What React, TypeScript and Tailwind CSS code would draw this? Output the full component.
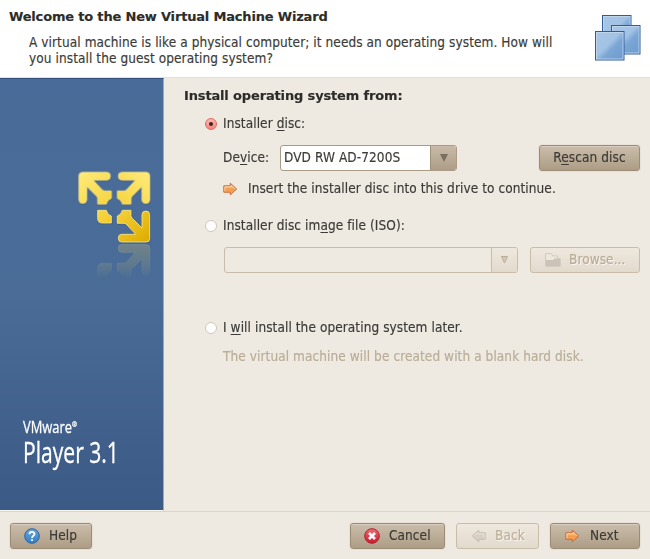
import React from "react";

const raised =
  "border border-[#9c8c76] bg-linear-to-b from-[#cbbdab] to-[#ad9d86] shadow-[inset_0_1px_0_#d9cdbf,0_0_0_1px_#e8e1d7]";
const faded = "border border-[#c9bda9] bg-linear-to-b from-[#efe8de] to-[#e3dacd]";

function Arrow({ muted = false, left = false }: { muted?: boolean; left?: boolean }) {
  return (
    <svg width="16" height="14" viewBox="0 0 16 14" className={left ? "shrink-0 -scale-x-100" : "shrink-0"}>
      <defs>
        <linearGradient id="orange" x1="0" y1="0" x2="0" y2="1">
          <stop offset="0" stopColor="#ffd09a" />
          <stop offset=".55" stopColor="#f59a4d" />
          <stop offset="1" stopColor="#ffb35f" />
        </linearGradient>
      </defs>
      <path
        d="M.8 3.8H7.3V1.2L13.6 7L7.3 12.8V10.2H.8Z"
        fill={muted ? "#d8d0c5" : "url(#orange)"}
        stroke={muted ? "#c4bbad" : "#c4683a"}
        strokeLinejoin="round"
      />
      <path d="M1.9 9.2V4.8H8.3V3.5L12 7" fill="none" stroke={muted ? "#eee8df" : "#ffe0b8"} strokeWidth=".8" />
    </svg>
  );
}

const arrowPath =
  "M67 52H141Q151 52 151 63Q151 75 141 75H99L125 103Q129 108 134 108H154V130Q142 133 139 147H113V131Q113 127 109 123L80 94V134Q80 145 68 145Q57 145 57 134V62Q57 52 67 52Z";

function LogoShapes({ fill, stroke, last }: { fill: string; stroke: string; last?: string }) {
  return (
    <g fill={fill} stroke={stroke} strokeWidth="2.5" strokeLinejoin="round">
      <path d={arrowPath} />
      <path d={arrowPath} transform="translate(326 0) scale(-1 1)" />
      <path d={arrowPath} transform="translate(326 313) scale(-1 -1)" fill={last ?? fill} />
      <path d="M113 166H139Q142 180 154 183V204H127Q113 204 113 190Z" />
    </g>
  );
}

function Logo() {
  return (
    <svg width="104" height="135" viewBox="0 0 312 405">
      <defs>
        <linearGradient id="gold" gradientUnits="userSpaceOnUse" x1="60" y1="50" x2="250" y2="250">
          <stop offset="0" stopColor="#ffec7c" />
          <stop offset=".5" stopColor="#f7d43c" />
          <stop offset="1" stopColor="#dfad00" />
        </linearGradient>
        <linearGradient id="goldSE" gradientUnits="userSpaceOnUse" x1="70" y1="52" x2="150" y2="147">
          <stop offset="0" stopColor="#dfad00" />
          <stop offset="1" stopColor="#f4d03a" />
        </linearGradient>
        <linearGradient id="fade" gradientUnits="userSpaceOnUse" x1="0" y1="264" x2="0" y2="372">
          <stop offset="0" stopColor="#fff" stopOpacity=".5" />
          <stop offset=".6" stopColor="#fff" stopOpacity=".28" />
          <stop offset="1" stopColor="#fff" stopOpacity="0" />
        </linearGradient>
        <mask id="mirror" maskUnits="userSpaceOnUse" x="0" y="266" width="312" height="139">
          <rect y="266" width="312" height="106" fill="url(#fade)" />
        </mask>
      </defs>
      <g mask="url(#mirror)">
        <g transform="translate(0 530) scale(1 -1)">
          <LogoShapes fill="#979c78" stroke="#b4b594" />
        </g>
      </g>
      <g transform="translate(1 2)" opacity=".35">
        <LogoShapes fill="#28405f" stroke="#28405f" />
      </g>
      <LogoShapes fill="url(#gold)" stroke="#fbe888" last="url(#goldSE)" />
    </svg>
  );
}

function Machines() {
  return (
    <svg width="46" height="46" viewBox="0 0 46 46">
      <defs>
        <linearGradient id="pane" x1="0" y1="0" x2="1" y2="1">
          <stop offset="0" stopColor="#a9c6e6" />
          <stop offset=".45" stopColor="#a2c3e5" />
          <stop offset=".6" stopColor="#7ba6d5" />
          <stop offset="1" stopColor="#6c9bd0" />
        </linearGradient>
      </defs>
      {[[7.5, 0.5], [16.5, 10.5], [0.5, 16.5]].map(([x, y]) => (
        <g key={x}>
          <rect x={x} y={y} width="28.5" height="28.5" fill="url(#pane)" stroke="#335c94" />
          <rect x={x + 1} y={y + 1} width="26.5" height="26.5" fill="none" stroke="#c5daf0" strokeWidth=".8" />
        </g>
      ))}
    </svg>
  );
}

function Radio({ on = false }: { on?: boolean }) {
  return (
    <span
      className={
        on
          ? "flex size-3 shrink-0 items-center justify-center rounded-full border border-[#dc6a60] bg-linear-to-b from-[#f9b9b1] to-[#f2867e]"
          : "size-3 shrink-0 rounded-full border border-[#cfc6b8] bg-white"
      }
    >
      {on && <span className="size-[4px] rounded-full bg-[#48211c]" />}
    </span>
  );
}

function Key({ children }: { children: React.ReactNode }) {
  return <span className="underline decoration-1 underline-offset-2">{children}</span>;
}

function Label({ children }: { children: React.ReactNode }) {
  return <span className="-mt-[2px] block">{children}</span>;
}

export default function App() {
  return (
    <div className="flex h-[559px] w-[650px] flex-col overflow-hidden bg-[#eee9e1] font-['DejaVu_Sans_Condensed','DejaVu_Sans',sans-serif] text-[13.5px] leading-4 tracking-[0.08px] whitespace-nowrap text-[#3c3b37] [-webkit-text-stroke:0.15px]">
      <header className="flex h-[78px] shrink-0 justify-between border-b border-[#e6e0d4] bg-white pr-[9px] pl-[9px]">
        <div className="pt-[9px]">
          <h1 className="font-['DejaVu_Sans',sans-serif] text-[13px] font-bold tracking-[-0.18px] text-[#2d2c29]">
            Welcome to the New Virtual Machine Wizard
          </h1>
          <p className="mt-[9px] ml-5">
            A virtual machine is like a physical computer; it needs an operating system. How will
            <br />
            you install the guest operating system?
          </p>
        </div>
        <div className="pt-[15px]">
          <Machines />
        </div>
      </header>

      <div className="flex h-[433px] shrink-0">
        <aside className="flex w-[164px] shrink-0 flex-col border-t border-r border-b border-t-[#34527c] border-r-[#9da9b6] border-b-[#f8f5ef] bg-linear-to-b from-[#486b99] via-[#4a6c97] to-[#3b5a85] pt-[76px]">
          <div className="pl-[60px]">
            <Logo />
          </div>
          <div className="mt-[127px] pl-[23px] font-['Open_Sans',sans-serif] tracking-normal text-white [-webkit-text-stroke:0.3px]">
            <div className="flex h-5 origin-left scale-x-[.76] text-[17px] leading-5">
              <span>VMware</span>
              <span className="text-[8px] leading-[14px]">®</span>
            </div>
            <div className="mt-px h-7 origin-left scale-x-[.74] text-[28.5px] leading-7">Player 3.1</div>
          </div>
        </aside>

        <main className="flex flex-1 flex-col pr-[10px] pl-5">
          <h2 className="mt-[10px] font-['DejaVu_Sans',sans-serif] text-[13px] font-bold tracking-[-0.15px] text-[#2d2c29]">
            Install operating system from:
          </h2>

          <div className="mt-3 ml-[21px] flex h-4 items-center gap-[6px]">
            <Radio on />
            <Label>Installer <Key>d</Key>isc:</Label>
          </div>
          <div className="mt-[13px] ml-[39px] flex h-[26px] items-center">
            <span className="-mt-[2px] w-[57px]">De<Key>v</Key>ice:</span>
            <div className="flex h-[26px] w-[177px] overflow-hidden rounded-[3px] border border-[#a99b86] bg-white">
              <span className="flex-1 pl-[3px] leading-[22px]">DVD RW AD-7200S</span>
              <span className="flex w-[26px] items-center justify-center border-l border-[#a09077] bg-linear-to-b from-[#c9bba8] to-[#ad9d87]">
                <svg width="8" height="8" viewBox="0 0 8 8"><path d="M0 0H8L4 8Z" fill="#7b6e5c" /></svg>
              </span>
            </div>
            <div className={`ml-auto flex h-[26px] w-[101px] items-center justify-center rounded-[3px] ${raised}`}>
              <Label>R<Key>e</Key>scan disc</Label>
            </div>
          </div>
          <div className="mt-[10px] ml-[39px] flex h-4 items-center gap-[9px]">
            <Arrow />
            <Label>Insert the installer disc into this drive to continue.</Label>
          </div>

          <div className="mt-[21px] ml-[21px] flex h-4 items-center gap-[6px]">
            <Radio />
            <Label>Installer disc im<Key>a</Key>ge file (ISO):</Label>
          </div>
          <div className="mt-[13px] ml-[40px] flex h-[26px] justify-between">
            <div className="flex w-[294px] overflow-hidden rounded-[3px] border border-[#c9bda9]">
              <span className="flex-1" />
              <span className="flex w-[26px] items-center justify-center border-l border-[#c9bda9] bg-linear-to-b from-[#efe8de] to-[#e3dacd]">
                <svg width="7" height="8" viewBox="0 0 7 8"><path d="M.5 .5H6.5L3.5 7Z" fill="#d3cabb" stroke="#b9ad99" /></svg>
              </span>
            </div>
            <div className={`flex w-[110px] items-center rounded-[3px] pl-[14px] text-[#b9ad97] [text-shadow:1px_1px_0_#f8f4ee] ${faded}`}>
              <svg width="16" height="16" viewBox="0 0 16 16" className="mr-2">
                <path d="M.5 14V1.5H6L8 4H12.5V7H15V14Z" fill="#ece6dd" stroke="#d3cbbf" />
                <path d="M1 14.5V8H8L9.5 6.5H15.5V14.5Z" fill="#cbc3b7" />
              </svg>
              <Label>Browse...</Label>
            </div>
          </div>

          <div className="mt-[47px] ml-[21px] flex h-4 items-center gap-[6px]">
            <Radio />
            <Label>I <Key>w</Key>ill install the operating system later.</Label>
          </div>
          <p className="mt-3 ml-[39px] text-[#b9ad97]">The virtual machine will be created with a blank hard disk.</p>
        </main>
      </div>

      <footer className="flex flex-1 items-start border-t border-[#ddd5c8] px-[10px] pt-[11px]">
        <div className={`flex h-[26px] w-[82px] items-center rounded-[3px] pl-[13px] ${raised}`}>
          <svg width="16" height="16" viewBox="0 0 16 16" className="mr-[9px]">
            <defs>
              <linearGradient id="blue" x1="0" y1="0" x2="0" y2="1">
                <stop offset="0" stopColor="#6ba5da" />
                <stop offset="1" stopColor="#317fc4" />
              </linearGradient>
            </defs>
            <circle cx="8" cy="8" r="7.3" fill="url(#blue)" stroke="#2b62a0" />
            <path d="M5.5 6.2C5.5 3.2 10.5 3.2 10.5 6C10.5 7.8 8 7.8 8 10" fill="none" stroke="#fff" strokeWidth="1.8" />
            <circle cx="8" cy="12" r="1.1" fill="#fff" />
          </svg>
          <Label>Help</Label>
        </div>
        <div className={`ml-auto flex h-[26px] w-[95px] items-center rounded-[3px] pl-[13px] ${raised}`}>
          <svg width="16" height="16" viewBox="0 0 16 16" className="mr-[9px]">
            <defs>
              <linearGradient id="red" x1="0" y1="0" x2="0" y2="1">
                <stop offset="0" stopColor="#ed6e70" />
                <stop offset="1" stopColor="#c9182c" />
              </linearGradient>
            </defs>
            <circle cx="8" cy="8" r="7.3" fill="url(#red)" stroke="#b71b2b" />
            <path d="M5 5L11 11M11 5L5 11" stroke="#fff" strokeWidth="2.6" />
          </svg>
          <Label>Cancel</Label>
        </div>
        <div className={`ml-[11px] flex h-[26px] w-[83px] items-center gap-[9px] rounded-[3px] pl-[13px] text-[#bdb19d] [text-shadow:1px_1px_0_#f8f4ee] ${faded}`}>
          <Arrow muted left />
          <Label>Back</Label>
        </div>
        <div className={`ml-[11px] flex h-[26px] w-[90px] items-center gap-[9px] rounded-[3px] pl-[14px] ${raised}`}>
          <Arrow />
          <Label>Next</Label>
        </div>
      </footer>
    </div>
  );
}
